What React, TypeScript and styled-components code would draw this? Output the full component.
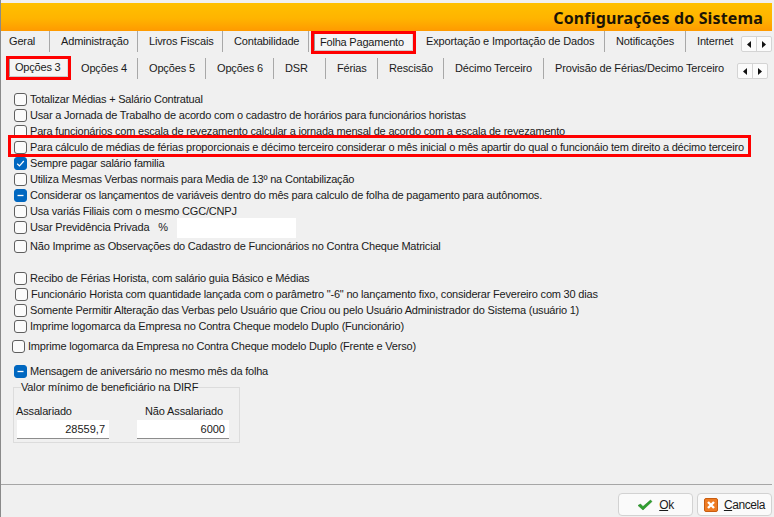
import React from 'react'
import styled, { createGlobalStyle } from 'styled-components'

const GlobalStyle = createGlobalStyle`
  html, body {
    margin: 0;
    padding: 0;
    background: #f0f0f0;
  }
  body {
    font-family: 'Liberation Sans', Arial, sans-serif;
    font-size: 11px;
    color: #1a1a1a;
  }
`

const Windowed = styled.div`
  width: 774px;
  height: 517px;
  box-sizing: border-box;
  padding: 3px 2px 0 0;
  border-left: 1px solid #8a8a8a;
  background: #f0f0f0;
  display: flex;
  flex-direction: column;
  overflow: hidden;
`

const TitleBar = styled.div`
  height: 28px;
  flex: none;
  box-sizing: border-box;
  padding: 1px 9px 0 0;
  display: flex;
  align-items: center;
  justify-content: flex-end;
  background: linear-gradient(#ffc000, #ffb400 55%, #ff9a00);
  font-family: 'Noto Sans', sans-serif;
  font-size: 16px;
  font-weight: bold;
  letter-spacing: 0.15px;
  color: #1c1405;
`

const TabStrip = styled.div<{ $h: number; $indent: number }>`
  height: ${(p) => p.$h}px;
  flex: none;
  display: flex;
  padding-left: ${(p) => p.$indent}px;
  position: relative;
`

const Tab = styled.div<{ $w: number; $pad?: number; $top?: number; $last?: boolean }>`
  width: ${(p) => p.$w}px;
  height: 21px;
  margin-top: ${(p) => p.$top ?? 0}px;
  flex: none;
  box-sizing: border-box;
  padding-left: ${(p) => p.$pad ?? 11}px;
  line-height: 20px;
  white-space: nowrap;
  letter-spacing: -0.15px;
  border-right: ${(p) => (p.$last ? 'none' : '1px solid #a8a8a8')};
`

const ActiveTab = styled.div<{ $w: number; $h: number; $top: number }>`
  width: ${(p) => p.$w}px;
  height: ${(p) => p.$h}px;
  margin: ${(p) => p.$top}px 2px 0 5px;
  flex: none;
  box-sizing: border-box;
  padding-left: 5px;
  line-height: ${(p) => p.$h - 1}px;
  white-space: nowrap;
  letter-spacing: -0.2px;
  background: #f5f5f5;
  border-left: 1px solid #999;
  border-bottom: 1px solid #ccc;
  border-right: 1px solid #ddd;
  outline: 3px solid #f00;
`

const Scroller = styled.div<{ $right: number; $top: number }>`
  position: absolute;
  right: ${(p) => p.$right}px;
  top: ${(p) => p.$top}px;
  display: flex;
  width: 31px;
  height: 16px;
  box-sizing: border-box;
  background: #fbfbfb;
  border: 1px solid #d4d4d4;
  border-radius: 2px;
`

const ScrollButton = styled.div`
  flex: 1;
  display: flex;
  align-items: center;
  justify-content: center;
  & + & {
    border-left: 1px solid #d4d4d4;
  }
`

const Body = styled.div`
  flex: 1;
  padding: 5px 0 0 13px;
  display: flex;
  flex-direction: column;
`

const Option = styled.div<{ $top?: number; $shift?: number; $flag?: boolean }>`
  height: 16px;
  margin-top: ${(p) => p.$top ?? 0}px;
  margin-left: ${(p) => p.$shift ?? 0}px;
  display: flex;
  align-items: center;
  gap: 3px;
  white-space: nowrap;
  letter-spacing: -0.2px;
  position: relative;
  ${(p) =>
    p.$flag &&
    `
    &::after {
      content: '';
      position: absolute;
      left: -6px;
      top: -4px;
      width: 737px;
      height: 16px;
      border: 3px solid #f00;
    }
  `}
`

const Box = styled.span<{ $state?: 'checked' | 'mixed' }>`
  width: 13px;
  height: 13px;
  flex: none;
  box-sizing: border-box;
  border-radius: 3px;
  display: flex;
  align-items: center;
  justify-content: center;
  border: 1px solid ${(p) => (p.$state ? '#0067c0' : '#5f5f5f')};
  background: ${(p) => (p.$state ? '#0067c0' : '#fbfbfb')};
`

const Percent = styled.span`
  margin-left: 6px;
`

const PrivateInput = styled.div`
  width: 119px;
  height: 20px;
  margin: 2px 0 0 6px;
  background: #fff;
`

const GroupBox = styled.fieldset`
  width: 227px;
  height: 61px;
  box-sizing: border-box;
  margin: 3px 0 0 -1px;
  padding: 0 0 0 3px;
  border: 1px solid #dcdcdc;
  display: flex;
  gap: 28px;
`

const GroupTitle = styled.legend`
  padding: 0;
  margin-left: 4px;
  letter-spacing: -0.15px;
  line-height: 10px;
`

const Field = styled.div`
  width: 92px;
  display: flex;
  flex-direction: column;
  margin-top: 12px;
  gap: 1px;
`

const FieldLabel = styled.div<{ $center?: boolean }>`
  height: 15px;
  line-height: 15px;
  margin-left: ${(p) => (p.$center ? 2 : -1)}px;
  white-space: nowrap;
  letter-spacing: -0.15px;
  text-align: ${(p) => (p.$center ? 'center' : 'left')};
`

const FieldValue = styled.div`
  height: 19px;
  line-height: 19px;
  padding-right: 4px;
  text-align: right;
  background: #fff;
  border-bottom: 1px solid #8c8c8c;
  box-sizing: border-box;
`

const Footer = styled.div`
  height: 33px;
  flex: none;
  border-top: 1px solid #a6a6a6;
  box-sizing: border-box;
  padding: 8px 0 0 0;
  display: flex;
  justify-content: flex-end;
  gap: 4px;
`

const FooterButton = styled.div<{ $w: number }>`
  width: ${(p) => p.$w}px;
  height: 23px;
  box-sizing: border-box;
  background: #fafafa;
  border: 1px solid #d2d2d2;
  border-radius: 4px;
  display: flex;
  align-items: center;
  justify-content: center;
  gap: 6px;
  font-size: 12px;
  letter-spacing: -0.4px;
`

const Mnemonic = styled.span`
  text-decoration: underline;
`

const topTabs = [
  { label: 'Geral', w: 49, pad: 8 },
  { label: 'Administração', w: 88 },
  { label: 'Livros Fiscais', w: 85 },
  { label: 'Contabilidade', w: 86 },
]

const topTabsRest = [
  { label: 'Exportação e Importação de Dados', w: 190 },
  { label: 'Notificações', w: 81 },
  { label: 'Internet', w: 56, last: true },
]

const subTabs = [
  { label: 'Opções 4', w: 68 },
  { label: 'Opções 5', w: 68 },
  { label: 'Opções 6', w: 68 },
  { label: 'DSR', w: 52 },
  { label: 'Férias', w: 52 },
  { label: 'Rescisão', w: 66 },
  { label: 'Décimo Terceiro', w: 100 },
  { label: 'Provisão de Férias/Decimo Terceiro', w: 190, last: true },
]

type OptionRow = {
  text: string
  state?: 'checked' | 'mixed'
  top?: number
  shift?: number
  flag?: boolean
}

const firstOptions: OptionRow[] = [
  { text: 'Totalizar Médias + Salário Contratual' },
  { text: 'Usar a Jornada de Trabalho de acordo com o cadastro de horários para funcionários horistas' },
  { text: 'Para funcionários com escala de revezamento calcular a jornada mensal de acordo com a escala de revezamento' },
  {
    text: 'Para cálculo de médias de férias proporcionais e décimo terceiro considerar o mês inicial o mês apartir do qual o funcionáio tem direito a décimo terceiro',
    flag: true,
  },
  { text: 'Sempre pagar salário familia', state: 'checked' },
  { text: 'Utiliza Mesmas Verbas normais para Media de 13º na Contabilização' },
  { text: 'Considerar os lançamentos de variáveis dentro do mês para calculo de folha de pagamento para autônomos.', state: 'mixed' },
  { text: 'Usa variás Filiais com o mesmo CGC/CNPJ' },
]

const secondOptions: OptionRow[] = [
  { text: 'Não Imprime as Observações do Cadastro de Funcionários no Contra Cheque Matricial', top: 3 },
  { text: 'Recibo de Férias Horista, com salário guia Básico e Médias', top: 16 },
  { text: 'Funcionário Horista com quantidade lançada com o parâmetro "-6" no lançamento fixo, considerar Fevereiro com 30 dias', shift: 1 },
  { text: 'Somente Permitir Alteração das Verbas pelo Usuário que Criou ou pelo Usuário Administrador do Sistema (usuário 1)' },
  { text: 'Imprime logomarca da Empresa no Contra Cheque modelo Duplo (Funcionário)' },
  { text: 'Imprime logomarca da Empresa no Contra Cheque modelo Duplo (Frente e Verso)', top: 4, shift: -2 },
  { text: 'Mensagem de aniversário no mesmo mês da folha', state: 'mixed', top: 9 },
]

const BoxMark: React.FC<{ state?: 'checked' | 'mixed' }> = ({ state }) => {
  if (state === 'checked') {
    return (
      <svg width='9' height='9' viewBox='0 0 9 9'>
        <path d='M1.2 4.8 L3.5 7 L7.8 2' fill='none' stroke='#fff' strokeWidth='1.2' />
      </svg>
    )
  }
  if (state === 'mixed') {
    return (
      <svg width='9' height='9' viewBox='0 0 9 9'>
        <path d='M1.5 4.5 H7.5' fill='none' stroke='#fff' strokeWidth='1.3' />
      </svg>
    )
  }
  return null
}

const Row: React.FC<OptionRow> = ({ text, state, top, shift, flag }) => (
  <Option $top={top} $shift={shift} $flag={flag}>
    <Box $state={state}>
      <BoxMark state={state} />
    </Box>
    {text}
  </Option>
)

const Arrow: React.FC<{ dir: 'left' | 'right' }> = ({ dir }) => (
  <svg width='4' height='7' viewBox='0 0 4 7'>
    <path d={dir === 'left' ? 'M4 0 V7 L0 3.5 Z' : 'M0 0 V7 L4 3.5 Z'} fill='#111' />
  </svg>
)

const TabScroller: React.FC<{ right: number; top: number }> = ({ right, top }) => (
  <Scroller $right={right} $top={top}>
    <ScrollButton>
      <Arrow dir='left' />
    </ScrollButton>
    <ScrollButton>
      <Arrow dir='right' />
    </ScrollButton>
  </Scroller>
)

const App: React.FC = () => {
  return (
    <Windowed>
      <GlobalStyle />
      <TitleBar>Configurações do Sistema</TitleBar>
      <TabStrip $h={26} $indent={0}>
        {topTabs.map((t) => (
          <Tab key={t.label} $w={t.w} $pad={t.pad}>
            {t.label}
          </Tab>
        ))}
        <ActiveTab $w={99} $h={17} $top={3}>
          Folha Pagamento
        </ActiveTab>
        {topTabsRest.map((t) => (
          <Tab key={t.label} $w={t.w} $last={t.last}>
            {t.label}
          </Tab>
        ))}
        <TabScroller right={0} top={5} />
      </TabStrip>
      <TabStrip $h={29} $indent={3}>
        <ActiveTab $w={59} $h={18} $top={2}>
          Opções 3
        </ActiveTab>
        {subTabs.map((t) => (
          <Tab key={t.label} $w={t.w} $top={1} $last={t.last}>
            {t.label}
          </Tab>
        ))}
        <TabScroller right={4} top={6} />
      </TabStrip>
      <Body>
        {firstOptions.map((o) => (
          <Row key={o.text} {...o} />
        ))}
        <Option>
          <Box />
          Usar Previdência Privada
          <Percent>%</Percent>
          <PrivateInput />
        </Option>
        {secondOptions.map((o) => (
          <Row key={o.text} {...o} />
        ))}
        <GroupBox>
          <GroupTitle>Valor mínimo de beneficiário na DIRF</GroupTitle>
          <Field>
            <FieldLabel>Assalariado</FieldLabel>
            <FieldValue>28559,7</FieldValue>
          </Field>
          <Field>
            <FieldLabel $center>Não Assalariado</FieldLabel>
            <FieldValue>6000</FieldValue>
          </Field>
        </GroupBox>
      </Body>
      <Footer>
        <FooterButton $w={75}>
          <svg width='16' height='12' viewBox='0 0 16 12'>
            <path d='M1 6.5 L3.5 5 L6 7.5 L13.5 1 L15 2.5 L6 11 Z' fill='#2f9e2f' stroke='#1a7a1a' strokeWidth='0.5' />
          </svg>
          <span>
            <Mnemonic>O</Mnemonic>k
          </span>
        </FooterButton>
        <FooterButton $w={75}>
          <svg width='14' height='14' viewBox='0 0 14 14'>
            <rect x='0.5' y='0.5' width='13' height='13' rx='1.5' fill='#ee7b22' stroke='#c85d10' />
            <path d='M4 4 L10 10 M10 4 L4 10' stroke='#fff' strokeWidth='2.4' />
          </svg>
          <span>
            <Mnemonic>C</Mnemonic>ancela
          </span>
        </FooterButton>
      </Footer>
    </Windowed>
  )
}

export default App
